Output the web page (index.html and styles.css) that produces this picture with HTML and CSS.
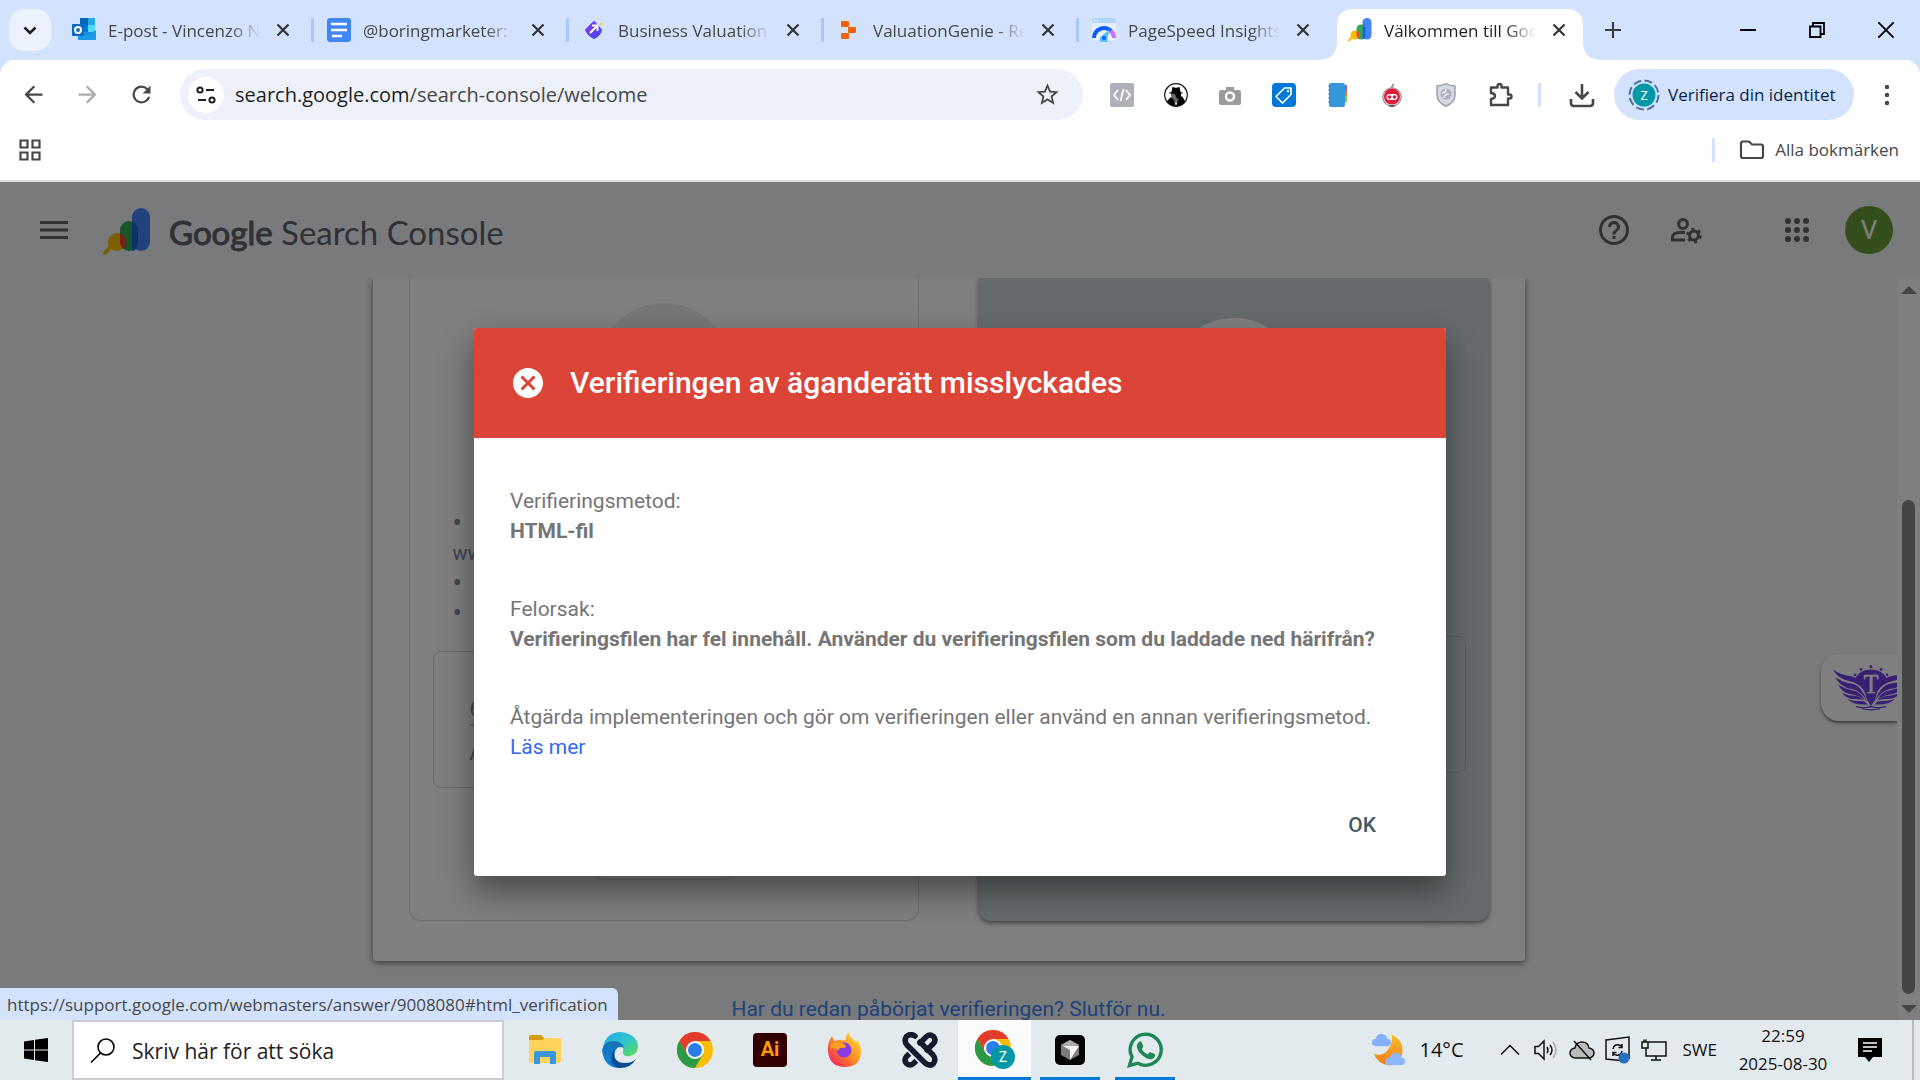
FILE: index.html
```html
<!DOCTYPE html>
<html lang="sv">
<head>
<meta charset="utf-8">
<title>Välkommen till Google Search Console</title>
<link rel="stylesheet" href="styles.css">
</head>
<body>
<svg class="defs" aria-hidden="true">
  <defs>
    <symbol id="close" viewBox="0 0 24 24"><path d="M6.500 6.500l11 11M17.500 6.500l-11 11" fill="none" stroke="currentColor" stroke-width="2.200"/></symbol>
    <symbol id="search-console" viewBox="0 0 48 48">
      <path d="M2 45l9-10" stroke="#fbbc04" stroke-width="4" stroke-linecap="round"/>
      <rect x="29" y="0" width="18" height="43" rx="9" fill="#4285f4"/>
      <rect x="17" y="13" width="18" height="30" rx="9" fill="#34a853"/>
      <path d="M29 13.600q6 2.500 6 9v11q0 9-6 9.400z" fill="#1967d2"/>
      <circle cx="14" cy="34" r="9" fill="#fbbc04"/>
      <path d="M17 25.500a9 9 0 0 1 3.500 15.200q-3.500-3-3.500-7z" fill="#ea4335"/>
    </symbol>
    <symbol id="chrome" viewBox="0 0 36 36">
      <circle cx="18" cy="18" r="18" fill="#fbbc04"/>
      <path d="M18 9H33.600A18 18 0 0 0 2.400 9L10.200 22.500z" fill="#e33b2e"/>
      <path d="M2.400 9A18 18 0 0 0 18 36L25.800 22.500L18 18L10.200 22.500z" fill="#2b9a47"/>
      <circle cx="18" cy="18" r="9" fill="#fff"/>
      <circle cx="18" cy="18" r="7" fill="#2b7de9"/>
    </symbol>
    <linearGradient id="edge-top" x1="0" y1="0" x2="1" y2="1"><stop offset="0" stop-color="#2aa7e8"/><stop offset=".5" stop-color="#2fc5cf"/><stop offset="1" stop-color="#63dc4b"/></linearGradient>
    <linearGradient id="edge-low" x1="0" y1="0" x2="0" y2="1"><stop offset="0" stop-color="#1470b4"/><stop offset="1" stop-color="#0e84dd"/></linearGradient>
    <linearGradient id="fox" x1="1" y1="0" x2="0" y2="1"><stop offset="0" stop-color="#fff04a"/><stop offset=".5" stop-color="#ff8a1e"/><stop offset="1" stop-color="#ec0f72"/></linearGradient>
    <linearGradient id="moon" x1="0" y1="0" x2="0" y2="1"><stop offset="0" stop-color="#fbc02d"/><stop offset="1" stop-color="#f07a13"/></linearGradient>
    <linearGradient id="gem" x1="0" y1="0" x2="1" y2="1"><stop offset="0" stop-color="#8a3ff0"/><stop offset="1" stop-color="#3d45e8"/></linearGradient>
  </defs>
</svg>

<header class="browser">
  <div class="tabstrip">
    <button class="tab-search" aria-label="Sök bland flikar"><svg width="24" height="24" viewBox="0 0 24 24"><path d="M6.500 9.500l5.500 5.500 5.500-5.500" fill="none" stroke="#1f1f1f" stroke-width="2.500"/></svg></button>
    <div class="tab">
      <svg class="favicon" viewBox="0 0 24 24"><path d="M8 0h15v22H8z" fill="#1490df"/><path d="M8 0h8v7H8z" fill="#0364b8"/><path d="M16 0h7v7h-7z" fill="#28a8ea"/><path d="M16 7h7v7h-7z" fill="#50d9ff"/><path d="M8 7h8v7H8z" fill="#0078d4"/><path d="M6 13l9 5 9-6v10H6z" fill="#1a9be4"/><rect y="6" width="12" height="12" rx="1" fill="#0a6cc4"/><circle cx="6" cy="12" r="3" fill="none" stroke="#fff" stroke-width="2"/></svg>
      <span class="tab-title">E-post - Vincenzo N</span>
      <button class="tab-close" aria-label="Stäng"><svg><use href="#close"/></svg></button><i class="tab-sep"></i>
    </div>
    <div class="tab">
      <svg class="favicon" viewBox="0 0 24 24"><rect width="24" height="24" rx="3" fill="#4285f4"/><path d="M4 6h16M4 12h16M5 18h10" stroke="#fff" stroke-width="2.500"/></svg>
      <span class="tab-title">@boringmarketer:</span>
      <button class="tab-close" aria-label="Stäng"><svg><use href="#close"/></svg></button><i class="tab-sep"></i>
    </div>
    <div class="tab">
      <svg class="favicon" viewBox="0 0 24 24"><path d="M12 4l7 8q-1 5-7 8-6-3-8-8z" fill="url(#gem)" stroke="url(#gem)" stroke-width="2" stroke-linejoin="round"/><path d="M8 15l7-7M10 7.500h5.500V13" fill="none" stroke="#fff" stroke-width="2"/><circle cx="19" cy="6" r="1.500" fill="#ffc43d"/></svg>
      <span class="tab-title">Business Valuation</span>
      <button class="tab-close" aria-label="Stäng"><svg><use href="#close"/></svg></button><i class="tab-sep"></i>
    </div>
    <div class="tab">
      <svg class="favicon" viewBox="0 0 24 24" fill="#f26207"><rect x="4" y="3" width="8" height="6" rx="1"/><rect x="11" y="9" width="8" height="6" rx="1"/><rect x="4" y="15" width="8" height="6" rx="1"/></svg>
      <span class="tab-title">ValuationGenie - Re</span>
      <button class="tab-close" aria-label="Stäng"><svg><use href="#close"/></svg></button><i class="tab-sep"></i>
    </div>
    <div class="tab">
      <svg class="favicon" viewBox="0 0 24 24"><rect width="24" height="22" rx="2" fill="#e3f0ff"/><path d="M0 5V2q0-2 2-2h20q2 0 2 2v3z" fill="#aed6fb"/><path d="M2 2.500h1.500M5 2.500h1.500" stroke="#fff" stroke-width="1.500"/><path d="M2 20a10 10 0 0 1 17-7" fill="none" stroke="#0b5cff" stroke-width="4"/><path d="M19 13a10 10 0 0 1 3 7" fill="none" stroke="#d06bf5" stroke-width="4"/><path d="M18 11l-2.500 9a4 4 0 1 1-6-2z" fill="#55c4f5"/><circle cx="12" cy="20" r="2" fill="#0b5cff"/></svg>
      <span class="tab-title">PageSpeed Insights</span>
      <button class="tab-close" aria-label="Stäng"><svg><use href="#close"/></svg></button>
    </div>
    <div class="tab tab-active">
      <svg class="favicon"><use href="#search-console"/></svg>
      <span class="tab-title">Välkommen till Goo</span>
      <button class="tab-close" aria-label="Stäng"><svg><use href="#close"/></svg></button>
    </div>
    <button class="icon-btn" aria-label="Ny flik"><svg width="24" height="24" viewBox="0 0 24 24"><path d="M12 4v16M4 12h16" stroke="#3c3c3c" stroke-width="2.200"/></svg></button>
    <div class="window-controls">
      <button aria-label="Minimera"><svg width="16" height="16" viewBox="0 0 16 16"><path d="M0 8h16" stroke="#000" stroke-width="2"/></svg></button>
      <button aria-label="Återställ"><svg width="16" height="16" viewBox="0 0 16 16"><path d="M1 4.500h10.500V15H1zM4 4.500V1h11v11h-3.500" fill="none" stroke="#000" stroke-width="1.800"/></svg></button>
      <button aria-label="Stäng fönstret"><svg width="16" height="16" viewBox="0 0 16 16"><path d="M0 0l16 16M16 0L0 16" stroke="#000" stroke-width="1.800"/></svg></button>
    </div>
  </div>

  <div class="toolbar">
    <div class="nav">
      <button class="icon-btn" aria-label="Tillbaka"><svg width="27" height="27" viewBox="0 0 24 24" fill="#474747"><path d="M20 11H7.830l5.590-5.590L12 4l-8 8 8 8 1.410-1.410L7.830 13H20v-2z"/></svg></button>
      <button class="icon-btn" aria-label="Framåt"><svg width="27" height="27" viewBox="0 0 24 24" fill="#ababab"><path d="M4 11h12.170l-5.590-5.590L12 4l8 8-8 8-1.410-1.410L16.170 13H4v-2z"/></svg></button>
      <button class="icon-btn" aria-label="Läs in igen"><svg width="27" height="27" viewBox="0 0 24 24" fill="#474747"><path d="M17.650 6.350A8 8 0 0 0 12 4a8 8 0 1 0 7.730 10h-2.080A6 6 0 1 1 12 6c1.660 0 3.140.69 4.220 1.780L13 11h7V4l-2.350 2.350z"/></svg></button>
    </div>
    <div class="omnibox">
      <button class="site-info" aria-label="Webbplatsinformation"><svg width="20" height="20" viewBox="0 0 20 20" fill="none" stroke="#1f1f1f" stroke-width="2"><circle cx="4" cy="5" r="2.600"/><path d="M10 5h8M2 15h8"/><circle cx="16" cy="15" r="2.600"/></svg></button>
      <span class="url">search.google.com<span class="url-path">/search-console/welcome</span></span>
      <button class="icon-btn" aria-label="Bokmärk"><svg width="27" height="27" viewBox="0 0 24 24" fill="#474747"><path d="M22 9.240l-7.190-.62L12 2 9.190 8.630 2 9.240l5.460 4.730L5.820 21 12 17.270 18.180 21l-1.630-7.030L22 9.240zM12 15.400l-3.760 2.270 1-4.280-3.320-2.880 4.380-.38L12 6.100l1.710 4.040 4.380.38-3.320 2.880 1 4.280L12 15.400z"/></svg></button>
    </div>
    <div class="extensions">
      <button class="icon-btn" aria-label="Kod"><svg width="24" height="24" viewBox="0 0 24 24"><rect width="24" height="24" rx="2" fill="#aeb1b8"/><path d="M8 7l-4 5 4 5M16 7l4 5-4 5M13.500 6l-3 12" fill="none" stroke="#fff" stroke-width="1.800"/></svg></button>
      <button class="icon-btn" aria-label="Agent"><svg width="24" height="24" viewBox="0 0 24 24"><circle cx="12" cy="12" r="11.300" fill="#fff" stroke="#111" stroke-width="1.200"/><path d="M8.500 4q3.500 1.500 7 0l1 5 3 1q-7 2.500-15 0l3-1z" fill="#000"/><path d="M7 11h10l-1 6-4 3-4-3z" fill="#666"/><path d="M3 18l4-4 3 3 2 6q-6 0-9-5zM12 23l2-6 4-4 3 5q-3 5-9 5zM11 11h6v4l-4 1z" fill="#000"/></svg></button>
      <button class="icon-btn" aria-label="Skärmbild"><svg width="24" height="24" viewBox="0 0 24 24" fill="#9b9b9b"><path d="M3 7h5V4h8v3h5q2 0 2 2v11q0 2-2 2H3q-2 0-2-2V9q0-2 2-2z"/><circle cx="12" cy="13.500" r="4" fill="none" stroke="#fff" stroke-width="2.400"/></svg></button>
      <button class="icon-btn" aria-label="Taggar"><svg width="24" height="24" viewBox="0 0 24 24"><rect width="24" height="24" rx="4" fill="#0078d7"/><path d="M4 13.500L12.500 5H19v6.500L10.500 20z" fill="none" stroke="#fff" stroke-width="1.700" stroke-linejoin="round"/><circle cx="16" cy="8" r="1.300" fill="#fff"/></svg></button>
      <button class="icon-btn" aria-label="Anteckningar"><svg width="24" height="24" viewBox="0 0 24 24"><rect x="3" width="16" height="24" rx="2" fill="#3498db"/><path d="M19 2h2v6h-2z" fill="#9b59b6"/><path d="M19 8h2v5h-2z" fill="#e67e22"/><path d="M19 13h2v6h-2z" fill="#8bc34a"/><path d="M2 3h3M2 7h3M2 11h3M2 15h3M2 19h3" stroke="#4f7fa5" stroke-width="1.200"/></svg></button>
      <button class="icon-btn" aria-label="Robot"><svg width="24" height="24" viewBox="0 0 24 24"><path d="M12 7V3l2-2" fill="none" stroke="#777" stroke-width="1.200"/><circle cx="12" cy="14" r="9.300" fill="#d9d9d9" stroke="#888"/><circle cx="12" cy="13.500" r="8" fill="#e3193b"/><rect x="6.500" y="11" width="11" height="6" rx="3" fill="#fff"/><circle cx="9.500" cy="14" r="1.800" fill="#e3193b"/><circle cx="14.500" cy="14" r="1.800" fill="#e3193b"/><path d="M8 22h8l-2 2h-4z" fill="#666"/></svg></button>
      <button class="icon-btn" aria-label="Sekretess"><svg width="24" height="24" viewBox="0 0 24 24"><path d="M12 .7q4 2.300 9 2.300v9q0 7-9 11.300Q3 19 3 12V3q5 0 9-2.300z" fill="#d4d9e2" stroke="#9ba2af" stroke-width="1.500"/><circle cx="12" cy="11" r="5.500" fill="#a7afbd"/><path d="M8 10q4 0 4-4M10 15q0-4 5-4" stroke="#eef0f4" stroke-width="1.500" fill="none"/></svg></button>
      <button class="icon-btn" aria-label="Tillägg"><svg width="27" height="27" viewBox="0 0 27 27"><path d="M4 6.500h6.500V5q0-2 2-2t2 2v1.500H21v7h1.500q2 0 2 2t-2 2H21V24H4v-6q4-.5 4-3t-4-3z" fill="none" stroke="#474747" stroke-width="2.400" stroke-linejoin="round"/></svg></button>
    </div>
    <i class="bar-sep"></i>
    <button class="icon-btn" aria-label="Nedladdningar"><svg width="26" height="26" viewBox="0 0 26 26"><path d="M13 2v14M6.500 10l6.500 6.500 6.500-6.500M2 17v4q0 3 3 3h16q3 0 3-3v-4" fill="none" stroke="#474747" stroke-width="2.600"/></svg></button>
    <button class="profile"><svg width="32" height="32" viewBox="0 0 32 32"><circle cx="16" cy="16" r="14.500" fill="none" stroke="#4a6fa5" stroke-width="2" stroke-dasharray="8 3.400"/><circle cx="16" cy="16" r="11.500" fill="#0097a7"/><text x="16" y="20.500" font-family="Roboto, sans-serif" font-size="12" fill="#fff" text-anchor="middle">Z</text></svg>Verifiera din identitet</button>
    <button class="icon-btn" aria-label="Meny"><svg width="24" height="24" viewBox="0 0 24 24" fill="#474747"><circle cx="12" cy="4" r="2.200"/><circle cx="12" cy="12" r="2.200"/><circle cx="12" cy="20" r="2.200"/></svg></button>
  </div>

  <div class="bookmarks">
    <button class="icon-btn" aria-label="Flikgrupper"><svg width="24" height="24" viewBox="0 0 24 24" fill="none" stroke="#474747" stroke-width="2.200"><path d="M2.500 2.500h7v7h-7zM14.500 2.500h7v7h-7zM2.500 14.500h7v7h-7zM14.500 14.500h7v7h-7z"/></svg></button>
    <i class="bar-sep"></i>
    <button class="all-bookmarks"><svg width="26" height="20" viewBox="0 0 26 20"><path d="M2 3.500Q2 1.500 4 1.500h6l3 3h9q2 0 2 2V16q0 2-2 2H4q-2 0-2-2z" fill="none" stroke="#474747" stroke-width="2.200"/></svg>Alla bokmärken</button>
  </div>
</header>

<div class="page">
  <div class="app-bar">
    <button class="icon-btn" aria-label="Huvudmeny"><svg width="28" height="20" viewBox="0 0 28 20"><path d="M0 2.500h28M0 10h28M0 17.500h28" stroke="#5f6368" stroke-width="3"/></svg></button>
    <div class="brand">
      <svg width="48" height="48"><use href="#search-console"/></svg>
      <span><b>Google</b> Search Console</span>
    </div>
    <div class="app-actions">
      <button class="icon-btn" aria-label="Hjälp"><svg width="36" height="36" viewBox="0 0 24 24" fill="#5f6368"><path d="M11 18h2v-2h-2v2zm1-16C6.480 2 2 6.480 2 12s4.480 10 10 10 10-4.480 10-10S17.520 2 12 2zm0 18c-4.410 0-8-3.590-8-8s3.590-8 8-8 8 3.590 8 8-3.590 8-8 8zm0-14c-2.210 0-4 1.790-4 4h2c0-1.100.9-2 2-2s2 .9 2 2c0 2-3 1.750-3 5h2c0-2.250 3-2.500 3-5 0-2.210-1.790-4-4-4z"/></svg></button>
      <button class="icon-btn" aria-label="Användarinställningar"><svg width="32" height="28" viewBox="0 0 32 28" fill="none" stroke="#5f6368" stroke-width="3"><circle cx="13" cy="8" r="4.500"/><path d="M15 16.500q-7-1-11 1.500-1.500 1-1.500 3v3H15"/><circle cx="24" cy="19.500" r="4.500"/><circle cx="24" cy="19.500" r="6.500" stroke-width="2.600" stroke-dasharray="3 3.807"/></svg></button>
      <button class="icon-btn apps" aria-label="Google-appar"><svg width="24" height="24" viewBox="0 0 24 24" fill="#5f6368"><circle cx="3" cy="3" r="3"/><circle cx="12" cy="3" r="3"/><circle cx="21" cy="3" r="3"/><circle cx="3" cy="12" r="3"/><circle cx="12" cy="12" r="3"/><circle cx="21" cy="12" r="3"/><circle cx="3" cy="21" r="3"/><circle cx="12" cy="21" r="3"/><circle cx="21" cy="21" r="3"/></svg></button>
      <button class="avatar">V</button>
    </div>
  </div>

  <div class="viewport">
    <main class="content">
      <section class="card">
        <div class="panel">
          <div class="disc"></div>
          <ul class="facts"><li class="dot">•</li><li>ww</li><li class="dot">•</li><li class="dot">•</li></ul>
          <div class="field"><span class="field-value">6</span><span>A</span></div>
          <div class="panel-action"></div>
        </div>
        <div class="panel panel-tinted">
          <div class="disc"></div>
          <div class="field"></div>
        </div>
      </section>
      <a class="resume" href="#">Har du redan påbörjat verifieringen? Slutför nu.</a>
      <div class="side-widget">
        <svg width="76" height="46" viewBox="0 0 76 42" preserveAspectRatio="none" fill="none" stroke="#6f3fe8">
          <path d="M22 12Q27 4 38 4t16 8q-9 6-12 20-2 2-4 6-2-4-4-6-3-14-12-20z" fill="#6f3fe8" stroke="none"/>
          <g fill="#6f3fe8" stroke="none">
            <path d="M0 4q8 5 17 6 13 2 19 23-5-15-18-18Q5 13 0 4z"/><path d="M2 11q8 5 16 6 10 1 16 16-6-9-15-11Q8 21 2 11z"/><path d="M5 18q7 4 14 5 8 1 13 9-6-4-13-5-9-1-14-9z"/><path d="M9 25q6 3 11 3 6 0 11 4-5-1-10-1-8 0-12-6z"/><path d="M14 31q6 2 17 2l4 3q-15 1-21-5z"/>
            <path d="M76 4q-8 5-17 6-13 2-19 23 5-15 18-18Q71 13 76 4z"/><path d="M74 11q-8 5-16 6-10 1-16 16 6-9 15-11Q68 21 74 11z"/><path d="M71 18q-7 4-14 5-8 1-13 9 6-4 13-5 9-1 14-9z"/><path d="M67 25q-6 3-11 3-6 0-11 4 5-1 10-1 8 0 12-6z"/><path d="M62 31q-6 2-17 2l-4 3q15 1 21-5z"/>
            <circle cx="22" cy="9" r="1.300"/><circle cx="28" cy="4" r="1.300"/><circle cx="38" cy="1.500" r="1.500"/><circle cx="48" cy="4" r="1.300"/><circle cx="54" cy="9" r="1.300"/>
          </g>
          <path d="M23 38q8 2 15 0 7 2 15 0M29 40q9 2 18 0" stroke-width="1"/>
          <text x="38" y="26" font-family="Liberation Serif, serif" font-size="24" fill="#fff" stroke="#fff" stroke-width=".5" text-anchor="middle">T</text>
        </svg>
      </div>
    </main>
    <div class="scrollbar" aria-hidden="true">
      <svg width="16" height="8" viewBox="0 0 16 8"><path d="M0 8l8-8 8 8z" fill="#8b8b8b"/></svg>
      <i class="thumb"></i>
      <svg width="16" height="8" viewBox="0 0 16 8"><path d="M0 0l8 8 8-8z" fill="#8b8b8b"/></svg>
    </div>
  </div>

  <div class="scrim">
    <div class="dialog" role="alertdialog" aria-labelledby="dialog-title">
      <div class="dialog-head">
        <svg width="36" height="36" viewBox="0 0 24 24" fill="#fff"><path d="M12 2C6.470 2 2 6.470 2 12s4.470 10 10 10 10-4.470 10-10S17.530 2 12 2zm5 13.590L15.590 17 12 13.410 8.410 17 7 15.590 10.590 12 7 8.410 8.410 7 12 10.590 15.590 7 17 8.410 13.410 12 17 15.590z"/></svg>
        <h1 id="dialog-title">Verifieringen av äganderätt misslyckades</h1>
      </div>
      <div class="dialog-body">
        <p>Verifieringsmetod:<br><strong>HTML-fil</strong></p>
        <p>Felorsak:<br><strong>Verifieringsfilen har fel innehåll. Använder du verifieringsfilen som du laddade ned härifrån?</strong></p>
        <p>Åtgärda implementeringen och gör om verifieringen eller använd en annan verifieringsmetod. <a href="#">Läs mer</a></p>
      </div>
      <div class="dialog-actions"><button>OK</button></div>
    </div>
  </div>
  <div class="status-bubble">https://support.google.com/webmasters/answer/9008080#html_verification</div>
</div>

<footer class="taskbar">
  <button class="start" aria-label="Start"><svg width="24" height="24" viewBox="0 0 24 24"><path d="M0 3.500l10-1.500v9.500H0zM11 1.800L24 0v11.500H11zM0 12.500h10V22L0 20.500zM11 12.500h13V24l-13-1.800z"/></svg></button>
  <label class="search"><svg width="26" height="26" viewBox="0 0 26 26" fill="none" stroke="#000" stroke-width="1.600"><circle cx="16" cy="9" r="8"/><path d="M10.500 15L1 24.500"/></svg><input type="text" placeholder="Skriv här för att söka" aria-label="Skriv här för att söka"></label>
  <div class="apps-row">
    <button aria-label="Utforskaren"><svg width="32" height="30" viewBox="0 0 32 30"><path d="M0 2q0-2 2-2h10l3 3v4H0z" fill="#d99a0b"/><path d="M0 5h13l3-2h14q2 0 2 2v21q0 2-2 2H2q-2 0-2-2z" fill="#ffd35c"/><path d="M5 29V18q0-2 2-2h18q2 0 2 2v11h-6v-7H11v7z" fill="#3a96dd"/></svg></button>
    <button aria-label="Edge"><svg width="36" height="36" viewBox="0 0 36 36"><path d="M1 14Q5 0 19 0q16 2 17 14 0 8-8 10-6 1-7-3 2-9-7-11Q5 9 1 14z" fill="url(#edge-top)"/><path d="M0 18Q2 9 11 9q9 0 11 7-6-3-9 3-4 9 5 17Q2 36 0 18z" fill="url(#edge-low)"/><path d="M13 17q-3 14 10 14 7 0 11-4-5 9-16 9-9-1-9-10 1-6 4-9z" fill="#0d4d94"/></svg></button>
    <button aria-label="Chrome"><svg width="36" height="36"><use href="#chrome"/></svg></button>
    <button aria-label="Illustrator"><svg width="34" height="34" viewBox="0 0 34 34"><rect width="34" height="34" rx="4" fill="#330000"/><text x="17" y="23" font-family="Roboto, sans-serif" font-weight="700" font-size="20" fill="#ff9a00" text-anchor="middle">Ai</text></svg></button>
    <button aria-label="Firefox"><svg width="36" height="36" viewBox="0 0 36 36"><path d="M1 20Q0 11 5 4l2 5 5-1q3-1 4 1l3-2q-1-3 3-7 0 4 3 6 2 2 4 4l1-2q4 5 4 12-1 15-16 15Q3 35 1 20z" fill="url(#fox)"/><circle cx="17" cy="18" r="7.500" fill="#8a3ce0"/><path d="M4 11q8-4 13 1 3 2 1 4-6-1-7 3-3-5-8-2z" fill="#ff9d1f"/></svg></button>
    <button aria-label="Flätan"><svg width="36" height="36" viewBox="0 0 36 36" fill="none"><g stroke="#151a2e" stroke-width="5.500" stroke-linecap="round" stroke-linejoin="round"><path d="M18 11l6.500-6.500Q28 1.500 31.500 4.500 34.500 8 31.500 11.500L25 18"/><path d="M18 25l-6.500 6.500Q8 34.500 4.500 31.500 1.500 28 4.500 24.500L11 18"/></g><path d="M15 5Q9 1 4.500 4.500 1.500 9 5 13l18 18" stroke="#e3eaed" stroke-width="9"/><path d="M13 4Q8 1 4.500 4.500 1.500 9 5 13l18 18Q28 35 31.500 31.500 34.500 27 31 23L18 10" stroke="#151a2e" stroke-width="5.500" stroke-linecap="round"/></svg></button>
    <button class="running current" aria-label="Chrome, aktiv"><svg width="40" height="40" viewBox="0 0 40 40"><svg width="36" height="36"><use href="#chrome"/></svg><circle cx="28" cy="27" r="12" fill="#0097a7"/><text x="28" y="32" font-family="Roboto, sans-serif" font-size="14" fill="#fff" text-anchor="middle">Z</text></svg></button>
    <button class="running" aria-label="Cursor"><svg width="30" height="30" viewBox="0 0 30 30"><rect width="30" height="30" rx="5" fill="#050505"/><path d="M15 5l9 5v10l-9 5-9-5V10z" fill="#7c7c7c"/><path d="M6 10l9-5 9 5-9 2z" fill="#aaa"/><path d="M8 11h16l-9 14V15z" fill="#f5f5f5"/></svg></button>
    <button class="running" aria-label="WhatsApp"><svg width="36" height="36" viewBox="0 0 36 36"><path d="M2.500 33.500l2.500-8.500A15.500 15.500 0 1 1 11 31.200z" fill="none" stroke="#1d8755" stroke-width="3.400"/><path d="M12.500 9.500q1.200-.6 2 .6l1.700 3.900q.2.800-.4 1.500l-1.200 1.500q2 3.800 6 5.600l1.800-2q.7-.7 1.500-.3l3.600 1.800q.8.500.6 1.400-.6 3.500-4.600 3.700-3.500 0-8-3.700-5.500-5-5.700-9.300 0-3.200 2.700-4.700z" fill="#1d8755"/></svg></button>
  </div>
  <div class="tray">
    <div class="weather"><svg width="36" height="36" viewBox="0 0 38 36"><path d="M22 2q13 6 11 20-3 12-14 12-12-1-16-12 7 3 13-2 7-7 6-18z" fill="url(#moon)"/><path d="M5 14q-5-1-4-5 1-3 4-3 2-6 7-5 5 1 5 5 4 0 4 4t-4 4z" fill="#86b0f7"/><path d="M19 34q-5-1-4-5 1-3 5-3 2-6 7-5 5 1 5 5 4 0 4 4t-4 4z" fill="#8eb6fa"/></svg><span>14°C</span></div>
    <div class="tray-icons">
      <svg width="24" height="24" viewBox="0 0 24 24"><path d="M3 16.500l9-9 9 9"/></svg>
      <svg width="24" height="24" viewBox="0 0 24 24"><path d="M1 8.500h3.500L10 3v18l-5.500-5.500H1zM13 9q2 3 0 6M16 7q4 5 0 10"/><path d="M19 4q6 8 0 16" stroke="#aaa"/></svg>
      <svg width="26" height="24" viewBox="0 0 26 24"><path d="M6 20q-5-1-5-5t5-5q1-6 7-6t7 6q5 1 5 5t-5 5z" fill="#bbb"/><path d="M5 3l17 19"/></svg>
      <svg width="26" height="28" viewBox="0 0 26 28"><path d="M1 4l23-3v21l-4 3L1 23zM8 13q1-5 6-4 2 0 3 2M17 8v3.500h-3.500M17 15q-1 5-6 4-2 0-3-2M8 20v-3.500h3.500"/><circle cx="19" cy="22" r="5.500" fill="#2670c0" stroke="none"/></svg>
      <svg width="26" height="24" viewBox="0 0 26 24"><path d="M7 4h18v14H5v-8M1 4h6v6H1zM3 4V1.500M5 4V1.500M15 18v4M10 22h10"/></svg>
    </div>
    <span class="lang">SWE</span>
    <div class="clock">22:59<br>2025-08-30</div>
    <button class="notice" aria-label="Meddelanden"><svg width="24" height="24" viewBox="0 0 24 24"><path d="M0 0h24v19h-9l-4 5-4-5H0z"/><path d="M5 5h14M5 9h14M5 13h9" stroke="#fff" stroke-width="1.400"/></svg></button>
    <i class="desktop-edge"></i>
  </div>
</footer>
</body>
</html>
```
FILE: styles.css
```css
* { box-sizing: border-box; }
body {
  margin: 0;
  height: 100vh;
  display: flex;
  flex-direction: column;
  overflow: hidden;
  font-family: "Open Sans", "Noto Sans", sans-serif;
  color: #1f1f1f;
}
button { border: 0; padding: 0; margin: 0; background: none; font: inherit; color: inherit; }
.defs { position: absolute; width: 0; height: 0; }
.icon-btn { display: flex; align-items: center; justify-content: center; width: 36px; height: 36px; flex: none; }

/* Browser chrome */
.browser { flex: none; background: #d3e3fd; }
.tabstrip { display: flex; align-items: flex-end; height: 60px; padding-left: 9px; }
.tab-search {
  display: flex; align-items: center; justify-content: center;
  width: 42px; height: 42px; margin: 0 8px 9px 0;
  border-radius: 15px; background: #ebf2fe;
}
.tab {
  position: relative;
  display: flex; align-items: center;
  flex: 0 1 255px; min-width: 0; height: 51px;
  padding: 0 0 9px 13px;
  font-size: 17px; color: #474747;
}
.tab > * { flex: none; }
.favicon { width: 24px; height: 24px; margin-right: 12px; }
.tab .tab-title {
  flex: 0 1 157px;
  overflow: hidden; white-space: nowrap; padding-top: 2px; line-height: 24px;
  mask-image: linear-gradient(to right, #000 122px, transparent 152px);
}
.tab-close { width: 24px; height: 24px; margin-left: auto; color: #333; }
.tab-close svg { display: block; width: 24px; height: 24px; }
.tab-sep { width: 3px; height: 24px; margin-left: 16px; border-radius: 1px; background: #a8c7fa; }
.tab:nth-child(6) { padding-right: 19px; }
.tab.tab-active {
  flex-basis: 246px; margin: 0 6px 0 3px; padding: 0 12px 9px 11px;
  border-radius: 15px 15px 0 0; background: #fff; color: #1f1f1f;
}
.tab-active::before, .tab-active::after {
  content: ""; position: absolute; bottom: 0; width: 15px; height: 15px;
}
.tab-active::before { right: 100%; background: radial-gradient(circle at 0 0, transparent 14px, #fff 15px); }
.tab-active::after { left: 100%; background: radial-gradient(circle at 100% 0, transparent 14px, #fff 15px); }
.tabstrip > .icon-btn { margin: 0 0 12px 6px; }
.window-controls { display: flex; margin-left: auto; }
.window-controls button { display: flex; align-items: center; justify-content: center; width: 69px; height: 60px; }

.toolbar {
  display: flex; align-items: center; height: 69px; padding: 0 15px;
  background: #fff; border-radius: 15px 15px 0 0;
}
.nav, .extensions { display: flex; gap: 18px; }
.omnibox {
  display: flex; align-items: center; flex: 1;
  height: 51px; margin: 0 21px; padding: 0 18px 0 8px;
  border-radius: 26px; background: #ecf1fa;
}
.site-info {
  display: flex; align-items: center; justify-content: center;
  width: 36px; height: 36px; margin-right: 11px; border-radius: 50%; background: #fff;
}
.url { flex: 1; font-size: 20px; line-height: 30px; white-space: nowrap; }
.url-path { color: #474747; }
.bar-sep { width: 3px; height: 24px; background: #d3e3fd; }
.toolbar .bar-sep { margin: 0 23px 0 20px; }
.profile {
  display: flex; align-items: center; gap: 8px;
  width: 240px; height: 51px; margin: 0 15px 0 14px; padding-left: 14px;
  border-radius: 26px; background: #d3e3fd; color: #041e49;
  font-size: 17px; white-space: nowrap;
}
.bookmarks {
  display: flex; align-items: center; height: 53px; padding: 0 21px 10px 12px;
  background: #fff; border-bottom: 2px solid #dedede;
}
.bookmarks .bar-sep { margin-left: auto; }
.all-bookmarks { display: flex; align-items: center; gap: 10px; margin-left: 24px; font-size: 17px; color: #474747; }

/* Search Console page */
.page {
  position: relative; flex: 1; min-height: 0;
  display: flex; flex-direction: column;
  background: #f0f4f8; font-family: Roboto, sans-serif;
}
.app-bar { display: flex; align-items: center; height: 96px; flex: none; padding: 0 27px 0 36px; }
.brand { display: flex; align-items: center; gap: 18px; padding-top: 4px; margin-left: 31px; font: 33px/48px Lato, sans-serif; color: #5f6368; }
.brand b { font-weight: 400; -webkit-text-stroke: 1px #5f6368; }
.app-actions { display: flex; align-items: center; gap: 36px; margin-left: auto; }
.app-actions .apps { margin-left: 39px; }
.app-actions .avatar { width: 48px; height: 48px; margin-left: -6px; border-radius: 50%; background: #689f38; color: #fff; font-size: 26px; }

.viewport { display: flex; flex: 1; min-height: 0; overflow: hidden; }
.content { position: relative; flex: 1; display: flex; flex-direction: column; align-items: center; overflow: hidden; }
.card {
  flex: none;
  display: grid; grid-template-columns: 1fr 1fr; gap: 60px;
  width: calc(100% - 96px); max-width: 1152px; padding: 0 36px 40px;
  border-radius: 0 0 4px 4px; background: #fff;
  box-shadow: 0 2px 6px rgba(0, 0, 0, .5);
}
.panel {
  display: flex; flex-direction: column;
  padding: 25px 23px 40px; border: 1px solid #dadce0; border-top: 0; border-radius: 0 0 12px 12px;
  font-size: 20px; line-height: 30px; color: #78909c;
}
.disc { align-self: center; width: 132px; height: 132px; border-radius: 50%; background: #e8edf1; }
.facts { list-style: none; margin: 73px 0 23px; padding: 0 20px; }
.facts .dot { height: 30px; font-size: 28px; }
.field { display: flex; flex-direction: column; height: 137px; padding: 42px 36px 0; border: 1px solid #d0d4d8; border-radius: 8px; gap: 12px; }
.field-value { border-bottom: 2px solid #bbb; }
.panel-action { align-self: center; width: 135px; height: 54px; margin-top: 38px; border: 1px solid #d0d4d8; border-radius: 6px; }
.panel-tinted { padding-top: 40px; border: 0; background: #cbd6db; box-shadow: 0 2px 5px rgba(0, 0, 0, .5); }
.panel-tinted .disc { background: #fff; }
.panel-tinted .field { margin-top: 186px; border-color: #b0bbc0; }
.resume { margin-top: 33px; font-size: 21px; line-height: 30px; color: #4285f4; text-decoration: none; }
.side-widget {
  position: absolute; right: 0; top: 376px; overflow: hidden;
  width: 76px; height: 67px; padding: 11px 0 0 12px;
  border-radius: 18px 0 0 18px; background: #fff; box-shadow: 0 2px 3px rgba(0, 0, 0, .5);
}
.scrollbar { display: flex; flex-direction: column; align-items: center; width: 23px; flex: none; padding: 8px 0 7px; background: #fff; }
.scrollbar svg { flex: none; }
.thumb { flex: 0 1 68%; width: 13px; margin: auto 0 11px; border-radius: 7px; background: #8b8b8b; }

.scrim {
  position: absolute; inset: 0;
  display: flex; align-items: center; justify-content: center;
  padding-top: 2px;
  background: rgba(0, 0, 0, .5);
}
.dialog {
  width: calc(100% - 96px); max-width: 972px; overflow: hidden;
  border-radius: 3px; background: #fff;
  box-shadow: 0 16px 36px rgba(0, 0, 0, .3), 0 14px 22px rgba(0, 0, 0, .15);
}
.dialog-head { display: flex; align-items: center; gap: 24px; height: 110px; padding: 0 36px; background: #db4437; color: #fff; }
.dialog-head h1 { margin: 0; font-size: 30px; font-weight: 500; line-height: 36px; }
.dialog-body { padding: 48px 36px 36px; font-size: 21px; line-height: 30px; color: #757575; }
.dialog-body p { margin: 0 0 48px; }
.dialog-body p:last-child { margin: 0; }
.dialog-body strong { font-weight: 700; }
.dialog-body a { color: #3367f6; text-decoration: none; }
.dialog-actions { display: flex; justify-content: flex-end; padding: 0 54px 24px; }
.dialog-actions button { height: 54px; padding: 0 16px; font-size: 21px; font-weight: 500; color: #455a64; }

.status-bubble {
  position: absolute; left: 0; bottom: 0;
  height: 32px; padding: 1px 10px 0 7px; border-radius: 0 6px 0 0;
  background: #d3e3fd; color: #474747;
  font: 17px/32px "Open Sans", "Noto Sans", sans-serif;
}

/* Taskbar */
.taskbar { display: flex; flex: none; height: 60px; background: #e3eaed; color: #111; }
.start { display: flex; align-items: center; justify-content: center; width: 72px; }
.search { display: flex; align-items: center; gap: 16px; width: 432px; padding: 2px 16px 0; border: 2px solid #ccc; background: #fff; }
.search input { flex: 1; min-width: 0; border: 0; outline: 0; padding: 0; background: none; font: 21px/30px "Open Sans", "Noto Sans", sans-serif; }
.search input::placeholder { color: #222; opacity: 1; }
.apps-row { display: flex; margin-left: 3px; }
.apps-row button { display: flex; align-items: center; justify-content: center; width: 75px; height: 60px; }
.apps-row .running { background: linear-gradient(#0078d7, #0078d7) center bottom / 60px 3px no-repeat; }
.apps-row .current { width: 73px; margin: 0 1px; background: linear-gradient(#0078d7, #0078d7) center bottom / 100% 3px no-repeat #fafbfc; }
.tray { display: flex; align-items: center; margin-left: auto; font-size: 17px; line-height: 28px; }
.weather { display: flex; align-items: center; gap: 12px; margin-right: 28px; font-size: 20px; }
.tray-icons { display: grid; grid-template-columns: repeat(5, 36px); justify-items: center; align-items: center; fill: none; stroke: #111; stroke-width: 1.500; }
.lang { margin-left: 11px; }
.clock { width: 132px; text-align: center; }
.notice { display: flex; width: 24px; margin: 0 30px 0 9px; }
.desktop-edge { width: 2px; height: 60px; margin-right: 6px; background: #b5babd; }
```
